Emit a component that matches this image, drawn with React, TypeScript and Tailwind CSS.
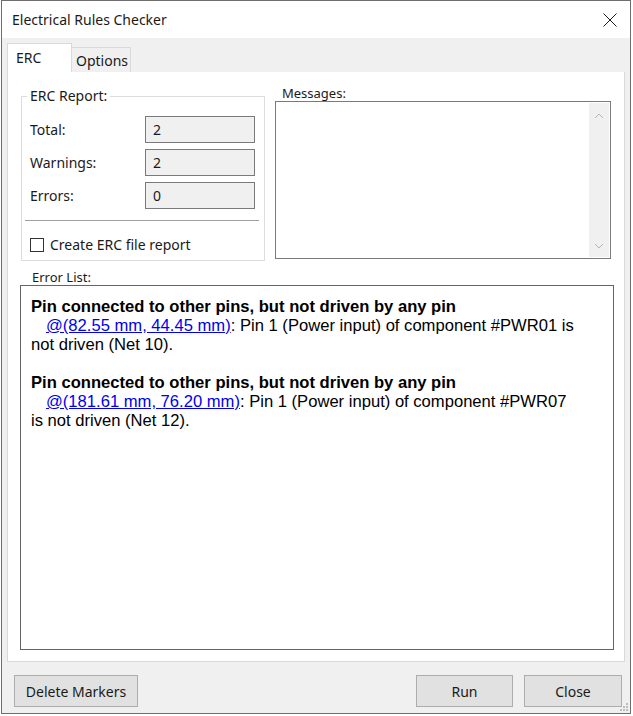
import React from "react";

const ui = { fontFamily: '"Noto Sans", "Open Sans", sans-serif' };
const html = { fontFamily: '"Liberation Sans", Arial, sans-serif' };

function ReadField({ label, value }: { label: string; value: string }) {
  return (
    <div className="flex items-center h-[27px]">
      <span className="w-[115px] text-[14px] text-[#1a1a1a]">{label}</span>
      <div className="w-[110px] h-[27px] border border-[#7a7a7a] bg-[#f0f0f0] flex items-center pl-[7px] text-[14px] text-[#1a1a1a]">
        {value}
      </div>
    </div>
  );
}

function DlgButton({ children, className = "" }: { children: React.ReactNode; className?: string }) {
  return (
    <button className={`h-[32px] border border-[#adadad] bg-[#e1e1e1] text-[14px] text-[#1a1a1a] ${className}`}>
      {children}
    </button>
  );
}

function ErrorItem({ at, rest }: { at: string; rest: string }) {
  return (
    <div>
      <div className="font-bold">Pin connected to other pins, but not driven by any pin</div>
      <div className="indent-[15px]">
        <span className="text-[#0000ee] underline">{at}</span>: {rest}
      </div>
    </div>
  );
}

export default function App() {
  return (
    <div className="w-[633px] h-[716px] bg-white overflow-hidden" style={ui}>
      <div className="relative ml-[1px] w-[630px] h-[714px] border border-[#6e6e6e] flex flex-col">
        {/* title bar */}
        <div className="h-[37px] bg-white flex items-center justify-between pl-[10px] pr-[13px]">
          <span className="text-[14px] text-[#1a1a1a]">Electrical Rules Checker</span>
          <svg width="14" height="14" viewBox="0 0 14 14">
            <path d="M0.5 0.5 L13.5 13.5 M13.5 0.5 L0.5 13.5" stroke="#1a1a1a" strokeWidth="1" />
          </svg>
        </div>

        <div className="flex-1 bg-[#f0f0f0] flex flex-col">
          {/* tabs */}
          <div className="flex items-end pt-[5px] px-[5px]">
            <div className="w-[65px] h-[29px] bg-white border border-b-0 border-[#d9d9d9] flex items-center pl-[8px] pb-[1px] text-[14px] text-[#1a1a1a]">
              ERC
            </div>
            <div className="w-[59px] h-[25px] bg-[#f0f0f0] border border-l-0 border-b-0 border-[#d9d9d9] flex items-center pl-[4px] text-[14px] text-[#1a1a1a]">
              Options
            </div>
          </div>

          {/* panel */}
          <div className="mx-[5px] h-[590px] bg-white border border-t-0 border-[#d9d9d9] flex flex-col pt-[15px]">
            <div className="flex ml-[13px]">
              <fieldset className="w-[244px] h-[174px] border border-[#dcdcdc] pl-[8px]">
                <legend className="ml-[-3px] px-[3px] text-[14px] leading-[18px] text-[#1a1a1a]">ERC Report:</legend>
                <div className="flex flex-col gap-[6px] mt-[11px]">
                  <ReadField label="Total:" value="2" />
                  <ReadField label="Warnings:" value="2" />
                  <ReadField label="Errors:" value="0" />
                </div>
                <div className="ml-[-5px] w-[234px] h-px bg-[#a0a0a0] mt-[11px]" />
                <div className="flex items-center gap-[6px] mt-[13px]">
                  <div className="w-[14px] h-[14px] border border-[#333333] bg-white" />
                  <span className="text-[14px] text-[#1a1a1a]">Create ERC file report</span>
                </div>
              </fieldset>

              <div className="ml-[10px] w-[336px] flex flex-col">
                <span className="pl-[7px] text-[13px] leading-[14px] mt-[-1px] text-[#1a1a1a]">Messages:</span>
                <div className="mt-[1px] h-[158px] border border-[#7a7a7a] bg-white flex justify-end p-px">
                  <div className="w-[20px] bg-[#f0f0f0] flex flex-col items-center justify-between pt-[10px] pb-[8px]">
                    <svg width="10" height="6" viewBox="0 0 10 6">
                      <path d="M1 5 L5 1 L9 5" fill="none" stroke="#b5b5b5" strokeWidth="1" />
                    </svg>
                    <svg width="10" height="6" viewBox="0 0 10 6">
                      <path d="M1 1 L5 5 L9 1" fill="none" stroke="#b5b5b5" strokeWidth="1" />
                    </svg>
                  </div>
                </div>
              </div>
            </div>

            <span className="ml-[24px] mt-[8px] text-[13px] leading-[16px] text-[#1a1a1a]">Error List:</span>
            <div
              className="ml-[12px] w-[594px] h-[365px] border border-[#646464] bg-white pl-[10px] pr-[37px] pt-[11px] text-[16.6px] leading-[19px] text-black flex flex-col gap-[19px]"
              style={html}
            >
              <ErrorItem at="@(82.55 mm, 44.45 mm)" rest="Pin 1 (Power input) of component #PWR01 is not driven (Net 10)." />
              <ErrorItem at="@(181.61 mm, 76.20 mm)" rest="Pin 1 (Power input) of component #PWR07 is not driven (Net 12)." />
            </div>
          </div>

          {/* buttons */}
          <div className="flex items-center mt-[13px] pl-[12px] pr-[8px]">
            <DlgButton className="w-[124px]">Delete Markers</DlgButton>
            <div className="flex-1" />
            <DlgButton className="w-[97px]">Run</DlgButton>
            <DlgButton className="w-[98px] ml-[11px]">Close</DlgButton>
          </div>
        </div>

        <svg className="absolute right-[1px] bottom-[1px]" width="10" height="10" viewBox="0 0 10 10">
          <g fill="#bdbdbd">
            <rect x="7" y="1" width="2" height="2" />
            <rect x="4" y="4" width="2" height="2" />
            <rect x="7" y="4" width="2" height="2" />
            <rect x="1" y="7" width="2" height="2" />
            <rect x="4" y="7" width="2" height="2" />
            <rect x="7" y="7" width="2" height="2" />
          </g>
        </svg>
      </div>
    </div>
  );
}
